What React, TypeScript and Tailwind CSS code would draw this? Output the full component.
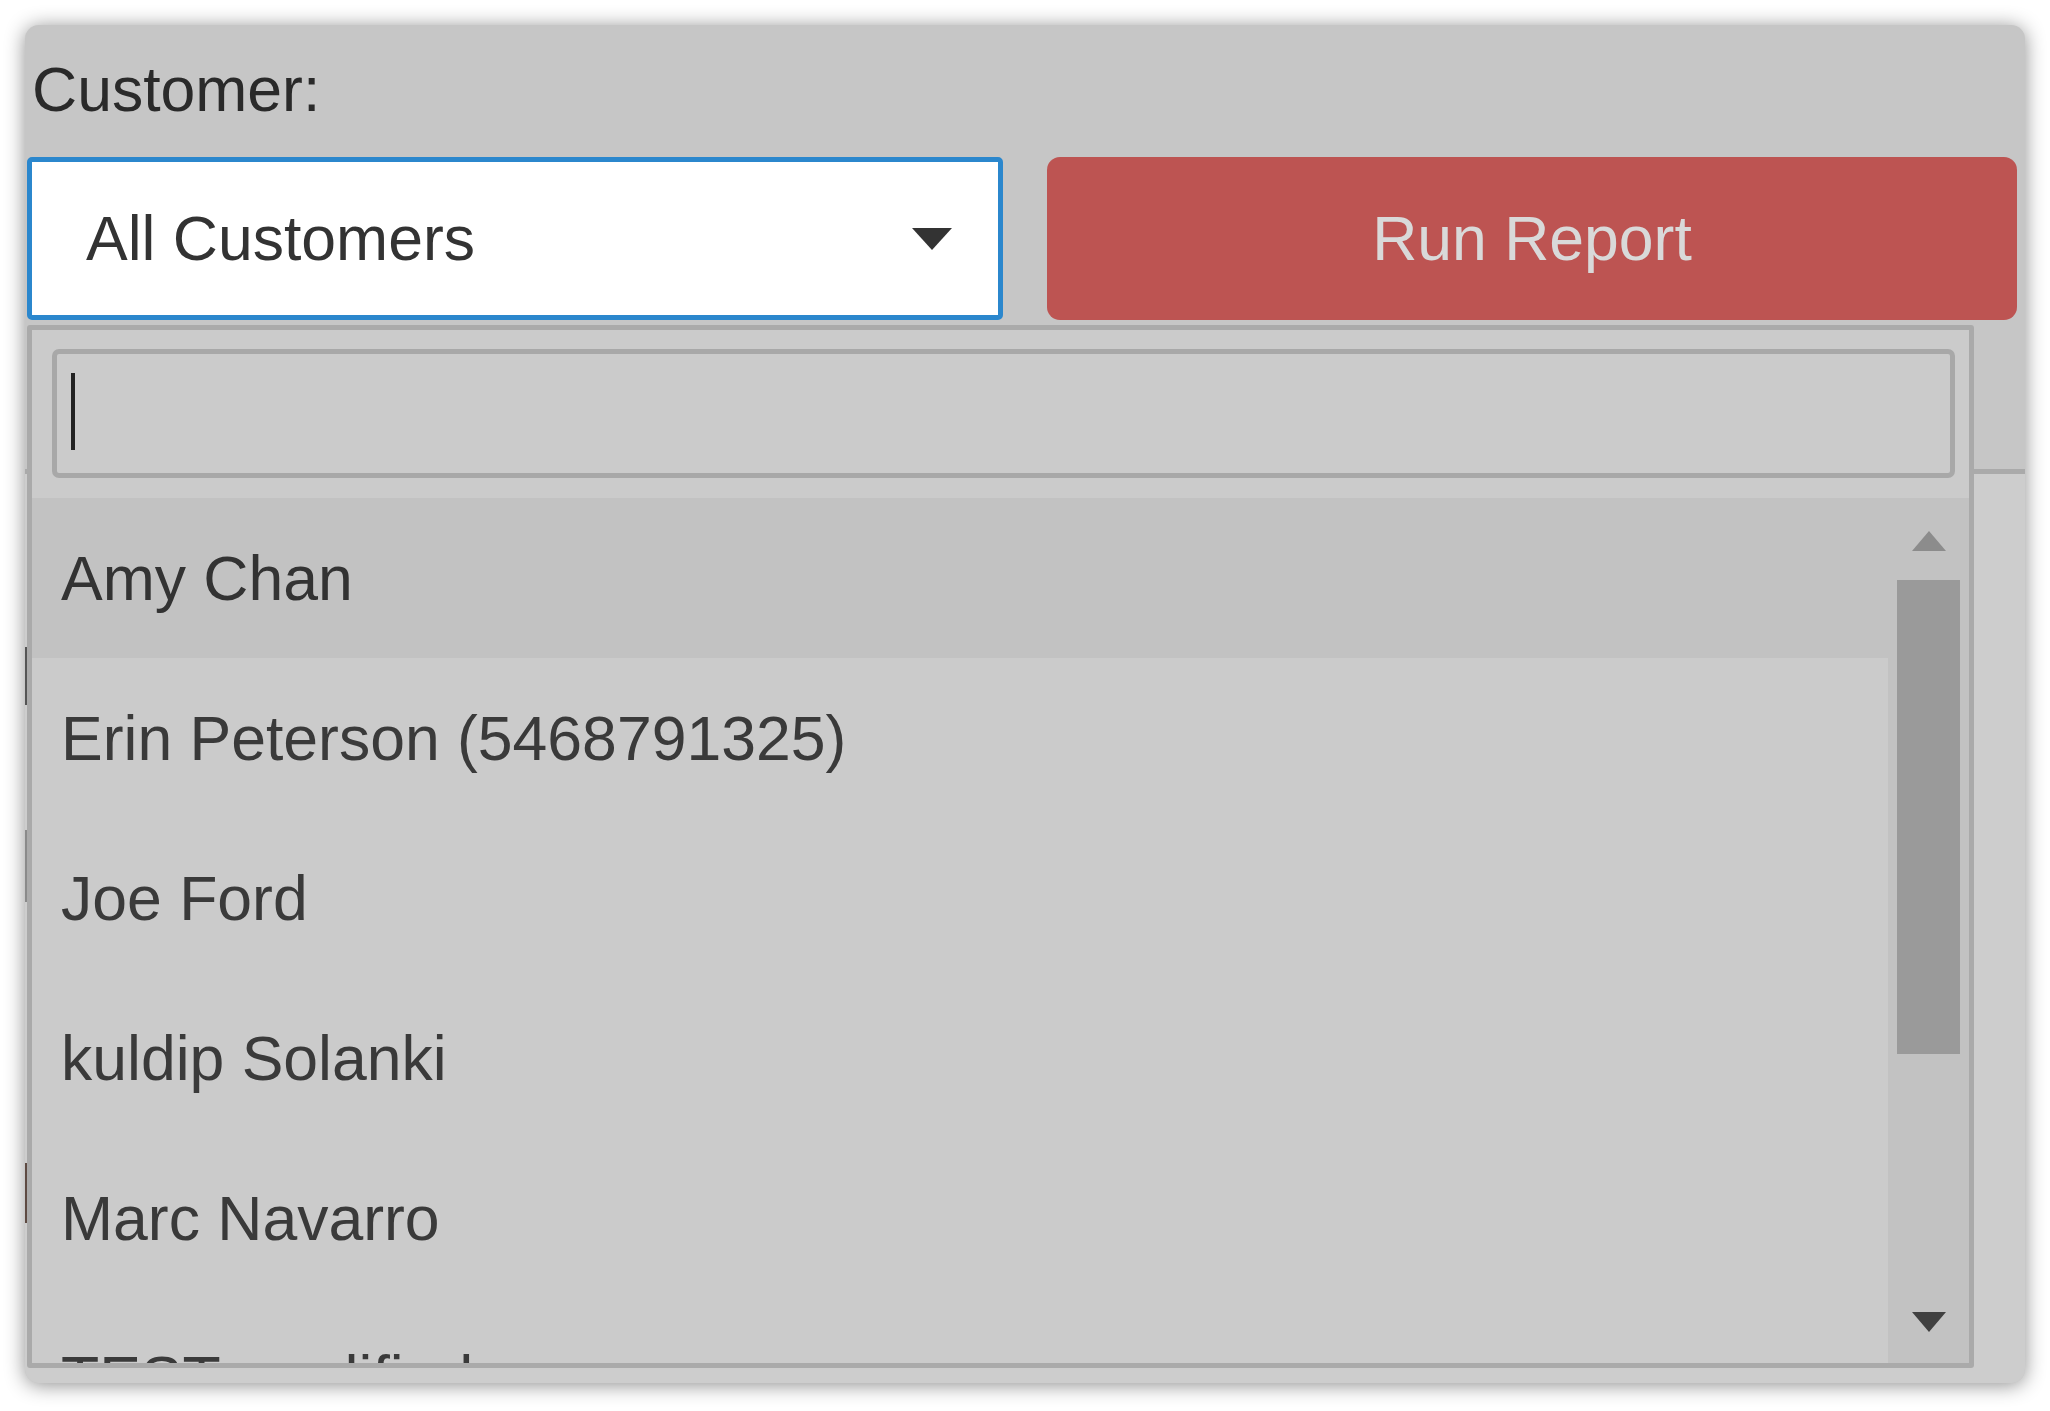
import React from "react";

const rows = [
  "Amy Chan",
  "Erin Peterson (5468791325)",
  "Joe Ford",
  "kuldip Solanki",
  "Marc Navarro",
  "TEST modified",
];

export default function App() {
  return (
    <div className="w-[2050px] h-[1411px] bg-white pt-[25px] pl-[25px] overflow-hidden font-['Liberation_Sans',Arial,sans-serif]">
      <div className="relative w-[2000px] h-[1358px] rounded-[14px] bg-[#c6c6c6] shadow-[0_2px_20px_rgba(0,0,0,0.45)] overflow-hidden flex flex-col pt-[33px]">
        {/* Label */}
        <div className="pl-[7px] h-[62px] text-[62.5px] leading-[62px] text-[#2a2a2a]">Customer:</div>

        {/* Select + button row */}
        <div className="mt-[37px] pl-[2px] flex gap-[44px]">
          <div className="w-[976px] h-[163px] border-[5px] border-[#2b87cd] rounded-[5px] bg-white flex items-center justify-between pl-[54px] pr-[46px]">
            <span className="text-[62.5px] leading-none text-[#333333]">All Customers</span>
            <svg width="40" height="22" viewBox="0 0 40 22">
              <polygon points="0,0 40,0 20,22" fill="#333333" />
            </svg>
          </div>
          <div className="w-[970px] h-[163px] rounded-[13px] bg-[#bd5452] flex items-center justify-center">
            <span className="text-[62.5px] leading-none text-[#d9d9d9]">Run Report</span>
          </div>
        </div>

        {/* Underlying page content */}
        <div className="h-[149px] shrink-0" />
        <div className="flex-1 border-t-[5px] border-[#aaaaaa] bg-[#cdcdcd] flex flex-col">
          <div className="mt-[173px] w-[2px] h-[58px] bg-[#555555]" />
          <div className="mt-[125px] w-[2px] h-[72px] bg-[#8a8a8a]" />
          <div className="mt-[261px] w-[2px] h-[60px] bg-[#5e4a42]" />
        </div>

        {/* Dropdown panel */}
        <div className="absolute left-[2px] top-[300px] w-[1947px] h-[1043px] border-[5px] border-[#aaaaaa] rounded-[3px] bg-[#cbcbcb] flex flex-col">
          <div className="pt-[19px] pb-[20px] pl-[20px] pr-[14px] shrink-0">
            <div className="h-[129px] border-[5px] border-[#a8a8a8] rounded-[7px] bg-[#cbcbcb] pl-[14px] pt-[19px]">
              <div className="w-[4px] h-[77px] bg-[#222222]" />
            </div>
          </div>
          <div className="flex-1 flex overflow-hidden">
            <div className="flex-1 flex flex-col overflow-hidden">
              {rows.map((r, i) => (
                <div
                  key={r}
                  className={
                    i === 0
                      ? "h-[160px] shrink-0 flex items-center pl-[29px] bg-[#c2c2c2] text-[62.5px] leading-none text-[#333333]"
                      : "h-[160px] shrink-0 flex items-center pl-[29px] text-[62.5px] leading-none text-[#3a3a3a]"
                  }
                >
                  {r}
                </div>
              ))}
            </div>
            <div className="w-[81px] bg-[#c2c2c2] flex flex-col items-center">
              <svg className="mt-[33px]" width="34" height="20" viewBox="0 0 34 20">
                <polygon points="17,0 34,20 0,20" fill="#8c8c8c" />
              </svg>
              <div className="mt-[29px] w-[63px] h-[474px] bg-[#9a9a9a]" />
              <svg className="mt-[258px]" width="34" height="20" viewBox="0 0 34 20">
                <polygon points="0,0 34,0 17,20" fill="#404040" />
              </svg>
            </div>
          </div>
        </div>
      </div>
    </div>
  );
}
